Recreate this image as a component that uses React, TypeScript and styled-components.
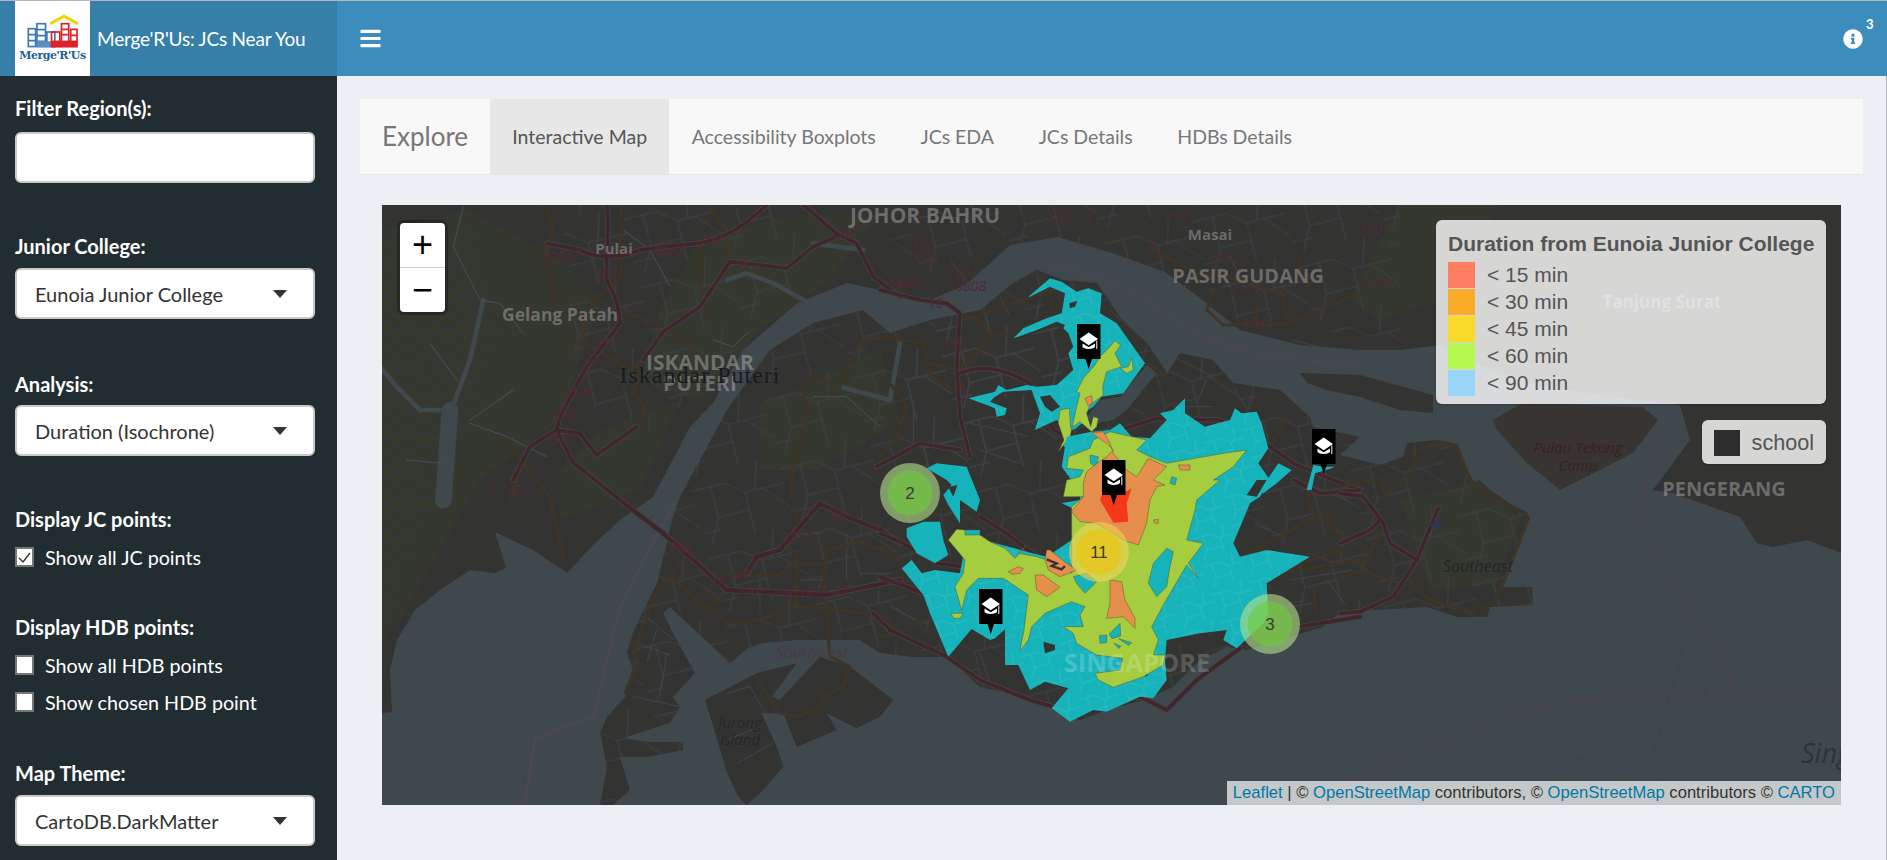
import React from "react";
import styled, { createGlobalStyle } from "styled-components";
import { FaBars, FaInfoCircle } from "react-icons/fa";

const UI_FONT = `Lato, "Noto Sans", sans-serif`;

const GlobalStyle = createGlobalStyle`
  html, body { margin: 0; padding: 0; height: 100%; overflow: hidden; }
  body { font-family: ${UI_FONT}; background: #ecf0f5; }
  * { box-sizing: border-box; }
`;

const Page = styled.div`
  width: 1887px;
  height: 860px;
  display: flex;
  flex-direction: column;
  border-top: 1px solid #b4b8ba;
  overflow: hidden;
`;

const Header = styled.header`
  flex: 0 0 75px;
  display: flex;
  background: #3c8dbc;
`;

const Brand = styled.div`
  width: 337px;
  display: flex;
  align-items: center;
  padding-left: 15px;
  background: #367fa9;
`;

const LogoBox = styled.div`
  width: 75px;
  height: 75px;
  background: #fff;
  display: flex;
  flex-direction: column;
  align-items: center;
  padding-top: 13px;
`;

const LogoText = styled.span`
  font-family: "DejaVu Serif", serif;
  font-weight: 700;
  font-size: 11px;
  letter-spacing: -0.5px;
  line-height: 14px;
  color: #1f5d9c;
`;

const BrandTitle = styled.span`
  margin-left: 7px;
  color: #fff;
  font-size: 19px;
  letter-spacing: -0.2px;
`;

const HeaderBar = styled.div`
  flex: 1;
  display: flex;
  align-items: center;
  justify-content: space-between;
  padding: 0 24px 0 22px;
  color: #fff;
`;

const InfoButton = styled.div`
  position: relative;
  display: flex;
  font-size: 20px;
`;

const InfoBadge = styled.span`
  position: absolute;
  left: 23px;
  top: -13px;
  font-size: 13px;
  font-weight: 700;
`;

const Body = styled.div`
  flex: 1;
  display: flex;
  min-height: 0;
`;

const Sidebar = styled.aside`
  width: 337px;
  padding: 20px 22px 0 15px;
  background: #222d32;
  color: #fff;
`;

const Field = styled.div<{ $top: number }>`
  margin-top: ${(p) => p.$top}px;
`;

const FieldLabel = styled.div<{ $gap?: number }>`
  height: 24px;
  line-height: 24px;
  font-size: 20px;
  font-weight: 700;
  margin-bottom: ${(p) => p.$gap ?? 9}px;
`;

const SelectBox = styled.div`
  height: 51px;
  display: flex;
  align-items: center;
  justify-content: space-between;
  padding: 0 26px 0 18px;
  background: #fff;
  border: 2px solid #c9c9c9;
  border-radius: 6px;
  color: #333;
  font-size: 20px;
`;

const Caret = styled.span`
  width: 0;
  height: 0;
  border-left: 7.5px solid transparent;
  border-right: 7.5px solid transparent;
  border-top: 8px solid #333;
`;

const CheckRow = styled.div<{ $gap?: number }>`
  display: flex;
  align-items: center;
  height: 22px;
  gap: 11px;
  margin-top: ${(p) => p.$gap ?? 0}px;
  font-size: 19.7px;
`;

const CheckBox = styled.span`
  width: 19px;
  height: 20px;
  display: flex;
  align-items: center;
  justify-content: center;
  background: #fff;
  border: 2px solid #767676;
`;

const Main = styled.main`
  flex: 1;
  padding: 23px 23px 0;
  border-right: 1px solid #b4b8bc;
`;

const TabBar = styled.nav`
  height: 76px;
  display: flex;
  background: #f8f8f8;
  border-bottom: 1px solid #e7e7e7;
`;

const TabBrand = styled.div`
  width: 130px;
  padding-left: 22px;
  line-height: 75px;
  font-size: 26px;
  color: #777;
`;

const Tab = styled.div<{ $active?: boolean }>`
  padding: 0 22.3px;
  line-height: 75px;
  font-size: 19.5px;
  color: ${(p) => (p.$active ? "#555" : "#777")};
  background: ${(p) => (p.$active ? "#e7e7e7" : "transparent")};
`;

const MapFrame = styled.div`
  position: relative;
  width: 1459px;
  height: 600px;
  margin: 30px 0 0 22px;
  overflow: hidden;
  background: #3f484c;
`;

const MapCanvas = styled.svg`
  display: block;
  width: 100%;
  height: 100%;
`;

const ZoomControl = styled.div`
  position: absolute;
  left: 15px;
  top: 15px;
  width: 51px;
  border: 3px solid rgba(0, 0, 0, 0.25);
  border-radius: 7px;
  background-clip: padding-box;
`;

const ZoomButton = styled.div<{ $first?: boolean }>`
  height: ${(p) => (p.$first ? 45 : 44)}px;
  display: flex;
  align-items: center;
  justify-content: center;
  background: #fff;
  color: #000;
  font-family: "Liberation Sans", sans-serif;
  font-size: 36px;
  line-height: 1;
  border-bottom: ${(p) => (p.$first ? "1px solid #ccc" : "none")};
  border-radius: ${(p) => (p.$first ? "4px 4px 0 0" : "0 0 4px 4px")};
`;

const LegendBox = styled.div`
  position: absolute;
  right: 15px;
  background: rgba(255, 255, 255, 0.8);
  border-radius: 6px;
  padding: 8px 12px;
  color: #555;
  font-family: "Liberation Sans", Arial, sans-serif;
  font-size: 21px;
  box-shadow: 0 1px 2px rgba(0, 0, 0, 0.2);
`;

const DurationLegend = styled(LegendBox)`
  top: 15px;
  width: 390px;
  height: 184px;
`;

const SchoolLegend = styled(LegendBox)`
  top: 215px;
  width: 124px;
  height: 44px;
  font-size: 21.6px;
  padding-top: 9px;
`;

const LegendTitle = styled.div`
  font-weight: 700;
  font-size: 21px;
  line-height: 24px;
  padding-top: 4px;
  margin-bottom: 5px;
  white-space: nowrap;
`;

const LegendRow = styled.div`
  display: flex;
  align-items: center;
  height: 27px;
  gap: 12px;
`;

const Swatch = styled.span<{ $color: string }>`
  width: 27px;
  height: 26px;
  background: ${(p) => p.$color};
`;

const Attribution = styled.div`
  position: absolute;
  right: 0;
  bottom: 0;
  height: 24px;
  line-height: 24px;
  padding: 0 6px;
  background: rgba(255, 255, 255, 0.7);
  color: #333;
  font-family: "Liberation Sans", Arial, sans-serif;
  font-size: 16.6px;
  white-space: nowrap;
`;

const AttrLink = styled.span`
  color: #0078a8;
`;

const PlaceLabel = styled.text<{ $size?: number; $alpha?: number }>`
  font-family: "Open Sans", sans-serif;
  font-weight: 700;
  font-size: ${(p) => p.$size ?? 17}px;
  fill: rgba(255, 255, 255, ${(p) => p.$alpha ?? 0.28});
  text-anchor: middle;
`;

const CityLabel = styled.text`
  font-family: "Liberation Serif", serif;
  font-size: 24px;
  letter-spacing: 1px;
  fill: #1a1b1d;
  text-anchor: middle;
`;

const RoadNumber = styled.text`
  font-family: "Open Sans", sans-serif;
  font-style: italic;
  font-size: 14px;
  fill: #512b33;
  text-anchor: middle;
`;

const AreaLabel = styled.text<{ $size?: number; $color?: string }>`
  font-family: "Open Sans", sans-serif;
  font-style: italic;
  font-size: ${(p) => p.$size ?? 15}px;
  fill: ${(p) => p.$color ?? "#25272a"};
  text-anchor: middle;
`;

const ClusterCount = styled.text`
  font-family: "Liberation Sans", sans-serif;
  font-size: 17px;
  fill: #3b3b3b;
  text-anchor: middle;
`;

const WATER = "#3f484c";
const LAND = "#333331";
const FOREST = "#34382f";
const MAROON = "#40252a";
const BROWN = "#3f3526";
const TEAL = "#17b3ba";
const GREEN = "#a6cc3f";
const ORANGE = "#e68f4c";
const RED = "#f4391b";

const Z3 = "translate(880 250) scale(.33333)";
const Z4 = "translate(880 480) scale(.33333)";
const Z7 = "translate(380 200) scale(.33333)";
const Z8 = "translate(380 500) scale(.33333)";
const Z11 = "translate(1340 430) scale(.33333)";

const JOHOR =
  "382,205 1841,205 1841,553 1807,540 1773,547 1757,543 1740,517 1673,493 1653,490 1673,463 1690,440 1680,405 1600,395 1540,385 1480,365 1440,345 1400,350 1360,350 1300,345 1240,330 1200,298 1165,272 1112,253 1058,237 1010,245 985,268 965,285 930,300 880,290 847,283 797,303 743,350 713,403 690,427 653,497 620,520 593,545 567,573 533,550 495,532 506,568 495,573 470,570 440,590 415,610 397,640 390,670 392,712 382,713";
const SINGAPORE =
  "673,517 680,497 727,410 770,350 813,323 863,310 890,333 930,320 980,310 1013,283 1037,270 1063,280 1097,283 1120,317 1147,343 1167,373 1180,353 1213,360 1233,383 1280,390 1310,417 1313,427 1360,437 1340,455 1380,465 1403,457 1407,443 1437,440 1453,443 1473,480 1490,490 1530,517 1503,587 1532,587 1533,605 1490,607 1487,617 1457,617 1427,607 1373,610 1340,613 1323,627 1280,640 1247,650 1227,647 1200,660 1173,687 1143,700 1107,710 1080,720 1053,710 1027,697 980,687 947,657 913,657 880,653 860,640 797,640 763,643 748,648 730,663 670,607 663,613 673,633 695,673 673,697 680,707 670,723 623,738 647,742 683,742 683,750 647,757 620,757 630,790 613,805 600,805 607,767 600,733 607,717 625,697 633,670 627,653 633,633 657,583";
const TEKONG =
  "1493,420 1523,403 1643,407 1658,420 1633,453 1560,490 1527,463 1497,430";
const UBIN = "1300,373 1360,375 1433,395 1433,413 1400,410 1360,397 1327,390 1307,383";
const JURONG_ISLAND =
  "975,600 1130,520 1250,490 1175,590 1200,600 1320,470 1410,500 1540,600 1500,650 1430,685 1340,640 1370,690 1250,740 1210,640 1190,640 1145,640 1190,740 1210,800 1140,880 1100,915 1075,890 1040,815 1000,680";
const FORESTS = [
  "382,230 470,210 560,260 600,300 560,420 480,480 400,620 382,640",
  "700,240 790,215 880,215 830,280 760,330 700,400 640,380 660,310",
  "600,430 680,400 640,490 560,520 560,470",
  "1400,205 1500,205 1440,300 1380,320 1350,300",
  "1400,500 1480,480 1520,520 1495,585 1430,590",
  "760,405 880,350 900,420 820,470 760,470",
];
const TOWNS = [
  "560,205 800,205 790,290 700,390 640,440 580,400",
  "880,205 1400,205 1400,340 1240,320 1100,250 990,250 900,285",
  "900,330 1080,300 1120,350 1080,470 920,470",
];

const ROADS_Z7 = {
  maroon: [
    "M680,15 C690,80 680,140 680,175 L680,240 Q720,310 720,370 L620,500 L540,650 L530,690 L580,790 L620,820 L720,900",
    "M500,130 L600,150 Q680,190 780,150 Q850,140 950,130 Q1050,120 1160,15",
    "M530,690 L600,700 L650,765 L770,680",
    "M400,840 L450,740 L530,690",
    "M1270,15 L1370,100 L1430,130 L1480,230 L1560,290",
    "M1370,110 L1300,140 L1220,205 L1050,185 L1000,260 L960,320 L850,395 L790,480",
  ],
  brown: [
    "M490,15 L520,70 L500,150 L520,270 L600,290 L700,320 L850,380 L920,420 L950,470",
    "M520,270 L520,330",
    "M725,15 L720,120 L725,230 L640,300 L610,370 L610,410 L555,465",
    "M600,420 L750,510 L790,480",
    "M780,500 L760,580 L795,620 L780,680",
    "M980,15 L1040,90 L1050,185",
    "M970,120 L960,250 L990,350",
    "M1290,530 L1380,560 L1420,470 L1450,420 L1560,410",
    "M1290,530 L1270,600 L1285,630 L1240,800 L1230,900",
    "M380,720 L430,790 L510,890",
    "M430,790 L390,900",
  ],
  rivers: [
    "M310,300 L270,480 L210,640",
    "M0,500 L50,560 L120,630 L210,630",
    "M1560,430 L1530,600 L1380,560",
    "M1270,300 L1180,250 L1100,220 L1040,240",
    "M1450,150 L1300,130",
  ],
  streams: [
    "M250,20 L220,140 L300,300 L360,310 L430,400",
    "M150,430 L230,540",
    "M270,660 L400,570",
    "M270,670 L380,710 L500,770",
    "M80,780 L190,790",
    "M730,90 L810,150 L870,260",
    "M1000,420 L1060,440 L1100,400",
    "M1300,590 L1400,590 L1500,680",
  ],
};

const ROADS_Z8 = {
  maroon: [
    "M720,0 L850,100 L1040,270 L1340,285 L1560,240",
    "M1100,220 L1130,170 L1200,150 L1320,10 L1400,50 L1500,90 L1560,130",
  ],
  brown: [
    "M510,0 L540,120 L550,180",
    "M920,170 L830,270 L760,460 L770,490 L735,580",
    "M870,230 L1040,370 L1150,360 L1230,320 L1340,325 L1520,350 L1560,400",
    "M990,320 L1040,270",
    "M1040,225 L1200,225 L1230,195 L1330,190",
    "M1210,120 L1250,170 L1250,320",
    "M1240,30 L1250,60 L1340,150 L1330,230 L1350,470 L1410,500 L1390,560 L1330,590 L1320,620 L1260,650 L1200,640 L1125,530",
    "M1340,150 L1440,125 L1510,150 L1560,180",
  ],
  streets:
    "M770,430 L870,465 M800,350 L880,420 M830,390 L800,490 M860,460 L840,590 M760,590 L900,620 M1040,580 L1110,560 L1190,700 M1070,790 L1180,730 M1140,680 L1040,720 M1260,240 L1330,240 M1140,240 L1140,340 M1260,100 L1330,100 M1400,100 L1400,240 M1440,220 L1540,220",
};

const ROADS_Z3 = {
  maroon: [
    "M0,120 L120,150 L200,160 L240,190 L230,350 L240,500 L270,620",
    "M-10,650 L120,580 L240,600",
    "M240,370 Q330,330 450,400 L520,540 L580,570 L640,550 L720,540 L830,505 L1020,510 L1170,590 L1240,640 L1360,690 L1440,720",
  ],
  brown: [
    "M0,260 L130,280 L155,380 L240,430",
    "M150,340 L240,360 L340,260 L500,210",
    "M285,200 L440,145 L510,120 L520,180 L500,220",
    "M340,260 L285,200 L240,210",
    "M820,0 L950,70 L1040,80 L1210,130 L1220,220 L1270,200 L1440,130",
    "M1000,120 L980,180 L1030,225 L1220,225",
    "M1130,170 L1130,220",
    "M1290,130 L1250,0",
    "M1170,590 L1220,510",
    "M800,340 L855,375",
    "M0,620 L60,560",
    "M50,560 L80,470 L30,400",
  ],
  streets:
    "M690,180 L780,260 M880,320 L1000,380 M980,390 L950,460 M1060,410 L1150,560 M880,470 L1000,470 M270,520 L450,560 M300,600 L420,640 M100,480 L100,590 M390,200 L360,140 M620,160 L720,140 M1050,20 L1100,120 M1240,270 L1390,310 M300,150 L210,30",
};

const ROADS_Z4 = {
  maroon: [
    "M0,160 L70,190 L170,250 L250,260",
    "M0,290 L130,340",
    "M300,110 L380,160 L470,230",
    "M-20,400 L30,450 L200,530 L300,600 L450,660 L520,680 L610,680 L780,650 L860,690 L950,600 L1080,505",
    "M1160,400 L1260,440 L1440,410",
    "M1240,0 L1320,40 L1440,30",
  ],
  brown: [
    "M1090,230 L1200,170 L1300,110 L1440,200",
    "M1280,0 L1290,90 L1350,110 L1400,190 L1380,210 L1200,275",
    "M1300,320 L1310,400",
    "M1200,280 L1440,240",
    "M0,470 L60,460 L135,420",
  ],
  streets:
    "M1230,300 L1420,270 M1340,300 L1400,380 M1230,380 L1300,370 M1120,130 L1190,160 M1400,60 L1300,20 M300,520 L330,610 M30,380 L110,420",
};

const ROADS_Z11 = {
  maroon: [
    "M0,550 L60,545 L160,500 L230,390 L295,235",
    "M0,190 L70,200 L130,280 L150,340 L230,390",
    "M0,340 L90,300 L120,270",
  ],
  brown: [
    "M120,210 L220,120 L230,60 L300,40 L350,45 L400,175 L560,250 L560,280 L470,510 L380,550 L270,510 L220,470 L210,450",
    "M0,170 L120,145 L130,180",
    "M0,450 L60,420 L120,310",
    "M60,420 L180,460",
  ],
  shipping: [
    "M960,0 L930,130 L890,250 L950,380 L1170,730 L1180,785",
    "M1500,805 L1110,785 L580,830 L30,1050",
  ],
  lanes: [
    "M420,0 L560,140 L800,360 L1020,640 L1240,1050",
    "M270,550 L240,750 L270,810 L420,870 L700,980 L960,1050",
    "M1030,660 L680,1020",
    "M1030,660 L920,1040",
    "M420,880 L660,1030",
  ],
};

const ISO = {
  northTeal:
    "445,140 510,85 545,95 590,125 625,115 665,130 660,190 710,220 795,340 730,430 665,440 640,470 610,490 620,510 580,540 540,520 530,510 465,540 480,490 455,420 370,425 345,440 330,455 380,475 375,495 350,500 345,475 320,465 265,445 345,425 355,405 380,420 440,405 470,410 530,405 580,360 565,310 580,290 565,250 530,215 470,240 400,265 430,235 500,205 545,190 555,130 510,110 450,140",
  northGreen:
    "705,272 722,285 705,310 725,350 680,365 668,410 670,435 630,465 620,490 632,530 640,500 655,505 650,530 635,545 600,515 572,535 568,475 540,480 535,520 552,570 535,605 570,560 590,470 600,430 590,425 610,385 645,345 660,320 690,290",
  crescent: "755,325 760,360 740,370 722,355 745,350",
  northHoles: [
    "568,160 592,152 585,170 570,175",
    "530,215 555,225 545,245",
    "480,440 510,435 540,470 515,485 495,470",
  ],
  northOrange: "615,445 635,437 637,460 625,468",
  seletarOrange: "895,645 930,645 930,660 900,660",
  seaChannel: "800,345 830,370 740,480 700,510 640,520 620,500 660,450 720,440",
  strip1: "1140,720 1195,640 1235,660 1190,700 1150,730",
  strip2: "1280,720 1300,645 1330,650 1365,650 1340,660 1305,670 1295,720",
  islet: "545,580 630,555 635,600 570,610",
  main:
    "545,-40 560,-130 635,-145 690,-150 720,-170 755,-130 810,-125 860,-180 840,-200 880,-210 915,-245 915,-200 975,-160 1050,-180 1065,-215 1085,-200 1130,-205 1145,-170 1165,-95 1135,-50 1170,0 1140,50 1110,70 1060,190 1080,230 1160,210 1290,230 1200,285 1160,310 1165,400 1150,430 1070,505 1030,480 1040,450 960,460 860,480 855,540 860,600 820,655 780,650 680,695 640,690 570,725 515,685 565,625 495,605 450,630 415,555 375,555 375,448 345,475 330,480 275,447 205,530 150,400 130,345 65,265 95,240 125,280 165,270 240,280 260,170 330,185 440,215 500,230 575,180 580,130 610,100 545,70 600,60 600,35",
  upperWest: "205,225 190,180 180,125 130,125 80,145 80,170 110,220 165,250",
  westBlob:
    "140,-35 170,-50 260,-40 300,60 290,95 240,60 240,130 205,75 190,45 215,15 200,0",
  holes: [
    "490,485 525,495 525,510 495,520",
    "710,425 725,430 715,445",
    "860,205 875,210 860,225",
    "795,572 805,585 795,590",
    "205,22 232,15 220,50",
    "618,302 645,305 630,315",
    "1100,45 1130,0 1160,0 1130,50",
  ],
  green:
    "560,-35 565,-70 630,-95 640,-120 690,-145 800,-120 770,-90 810,-70 860,-50 1030,-80 1100,-90 1060,-40 1000,0 1020,0 950,60 945,90 920,180 970,190 925,250 955,295 920,255 850,375 815,440 835,480 820,525 855,525 850,555 790,590 700,622 655,600 645,580 720,570 728,535 650,525 590,490 580,460 550,440 610,440 600,405 615,380 575,365 540,380 495,400 455,440 445,480 420,512 432,450 445,345 370,295 295,295 260,330 245,390 225,320 250,280 255,240 205,180 230,148 255,150 300,165 330,185 375,205 405,235 440,195 415,220 470,230 500,240 575,280 575,130 575,80 610,50 550,50 560,0 600,-10 610,-30",
  greenPatch: "212,400 250,400 240,415 222,415",
  tealOnGreen: [
    "860,205 820,250 805,310 830,350 860,320 870,260 880,215",
    "658,467 680,465 680,488 660,490",
    "688,462 720,430 722,468 696,476",
    "702,490 722,498 716,506",
    "716,476 755,488 746,496",
    "255,150 300,150 300,165 255,165",
    "630,-75 655,-70 650,-35 632,-50",
    "875,-10 890,-5 885,15 870,10",
    "580,290 620,280 650,305 615,340 590,310",
  ],
  orange:
    "635,-142 670,-145 690,-110 700,-80 740,-30 770,-10 805,-65 860,-40 820,0 855,15 830,20 810,60 800,130 775,195 730,180 700,160 650,130 600,125 575,95 610,50 610,10 620,-25 665,-60 680,-70 700,-90 680,-110 650,-130",
  orange2: "690,300 725,305 735,360 765,415 765,445 730,410 680,415 690,370",
  orange3: "500,210 510,210 560,250 590,270 540,290 505,270 495,240",
  orange4: "465,285 490,285 540,322 500,350 470,330",
  orange5: "385,275 415,260 430,265 420,280 395,282",
  orange6: "820,120 835,118 835,130 825,130",
  red: "660,60 665,45 730,40 755,25 740,70 745,125 700,128",
};

const PLACES: [string, number, number, number?][] = [
  ["JOHOR BAHRU", 925, 223, 21],
  ["PASIR GUDANG", 1248, 283, 20],
  ["Masai", 1210, 240, 15],
  ["Tanjung Surat", 1662, 308, 17],
  ["Pulai", 614, 254, 15],
  ["Gelang Patah", 560, 321, 17.5],
  ["ISKANDAR", 700, 370, 21],
  ["PUTERI", 700, 391, 21],
  ["PENGERANG", 1724, 496, 20],
];

const ROAD_NUMBERS: [string, number, number][] = [
  ["309A", 557, 262], ["308A", 668, 257], ["307", 605, 280], ["102", 711, 244],
  ["6", 742, 268], ["312", 606, 348], ["312", 595, 364], ["312A", 578, 398],
  ["313", 564, 420], ["313", 562, 444], ["17703", 509, 495], ["307", 846, 238],
  ["102", 926, 263], ["18801", 906, 288], ["16", 936, 308], ["1401", 962, 277],
  ["18808", 967, 291], ["108", 955, 350], ["8", 960, 390], ["1712", 1223, 264],
  ["1715", 1244, 298], ["1717", 1257, 331], ["2207", 1374, 234], ["2210", 1374, 287],
  ["1712", 1180, 223], ["212", 1060, 221], ["3", 1087, 225], ["4", 1151, 250],
  ["103", 922, 247], ["268", 680, 553], ["22", 716, 587], ["47", 741, 581],
  ["20", 750, 598], ["18", 785, 598], ["18", 806, 598], ["17", 841, 596],
  ["33", 789, 543], ["34", 836, 520], ["27", 873, 532],
];

const SCHOOL_PINS: [number, number][] = [
  [1077, 324],
  [1102, 460],
  [1312, 429],
  [979, 589],
];

const CLUSTERS: { x: number; y: number; n: string; big?: boolean }[] = [
  { x: 910, y: 493, n: "2" },
  { x: 1099, y: 552, n: "11", big: true },
  { x: 1270, y: 624, n: "3" },
];

const Poly = ({ p, fill, line }: { p: string; fill: string; line?: boolean }) => (
  <polygon
    points={p}
    fill={fill}
    stroke={line ? "#4b5a3a" : "none"}
    strokeWidth={line ? 1.5 : 0}
    strokeLinejoin="round"
  />
);

const Lines = ({
  paths,
  color,
  width,
  dash,
}: {
  paths: string[];
  color: string;
  width: number;
  dash?: string;
}) => (
  <g
    fill="none"
    stroke={color}
    strokeWidth={width}
    strokeLinecap="round"
    strokeLinejoin="round"
    strokeDasharray={dash}
  >
    {paths.map((d, i) => (
      <path key={i} d={d} />
    ))}
  </g>
);

// highway with the pale casing the dark tiles have round it
const Highway = ({ paths, width = 11 }: { paths: string[]; width?: number }) => (
  <>
    <Lines paths={paths} color="#444446" width={width + 5} />
    <Lines paths={paths} color={MAROON} width={width} />
  </>
);

const SchoolPin = ({ x, y }: { x: number; y: number }) => (
  <g transform={`translate(${x} ${y})`}>
    <path d="M0 0H23.5V35H15L11.7 45L8.5 35H0Z" fill="#000" />
    <path d="M11.7 8.5L21 15L11.7 21.2L2.5 15Z" fill="#fff" />
    <path d="M5.5 19.5L11.7 23.2L18 19.5V23C16 25.5 7.5 25.5 5.5 23Z" fill="#fff" />
    <path d="M19.8 16.5V25" stroke="#fff" strokeWidth="1" />
  </g>
);

const MapTiles = () => (
  <MapCanvas viewBox="382 205 1459 600">
    <defs>
      <pattern id="swamp" width="26" height="13" patternUnits="userSpaceOnUse">
        <path d="M2 4H11M16 10H24" stroke="#2d3a4e" strokeWidth="1" />
      </pattern>
      <pattern id="streets" width="92" height="70" patternUnits="userSpaceOnUse" patternTransform="rotate(-14)">
        <path
          d="M0 14H34L52 28H92M20 14V46L8 70M52 28V70M70 0L62 28M20 46H52M70 28L92 52M0 58H20"
          fill="none"
          stroke="#414245"
          strokeWidth="0.9"
        />
      </pattern>
      <pattern id="tealStreets" width="120" height="88" patternUnits="userSpaceOnUse" patternTransform="rotate(-18)">
        <path
          d="M0 20H48L76 40H120M28 20V64L12 88M76 40V88M96 0L88 40M28 64H76"
          fill="none"
          stroke="rgba(255,255,255,.09)"
          strokeWidth="3"
        />
      </pattern>
    </defs>
    <rect x="382" y="205" width="1459" height="600" fill={WATER} />
    <Poly p={JOHOR} fill={LAND} />
    <Poly p={SINGAPORE} fill={LAND} />
    <Poly p={TEKONG} fill="#373431" />
    <Poly p={UBIN} fill={LAND} />
    <g transform={Z8}>
      <Poly p={JURONG_ISLAND} fill={LAND} />
    </g>
    {FORESTS.map((p, i) => (
      <Poly key={i} p={p} fill={FOREST} />
    ))}
    <polygon points="382,230 470,225 500,330 440,480 395,600 382,640" fill="url(#swamp)" />
    <Poly p={SINGAPORE} fill="url(#streets)" />
    {TOWNS.map((p, i) => (
      <Poly key={i} p={p} fill="url(#streets)" />
    ))}
    <g transform={Z7}>
      <Lines paths={ROADS_Z7.rivers} color={WATER} width={14} />
      <Lines paths={["M210,630 L190,900"]} color={WATER} width={50} />
      <Lines paths={ROADS_Z7.streams} color="#465057" width={3} />
    </g>
    <g transform={Z3}>
      <Poly p={ISO.seaChannel} fill={WATER} />
    </g>
    <g transform={Z8}>
      <Lines paths={["M890,0 L780,200 L720,320 L640,650 L465,715 L435,915"]} color="#4a474f" width={9} />
      <Lines paths={["M845,0 L740,180 L460,690 L420,915"]} color="#3e4459" width={5} dash="25 24" />
      <path d={ROADS_Z8.streets} fill="none" stroke="#46474a" strokeWidth={2.5} />
      <Lines paths={ROADS_Z8.brown} color={BROWN} width={9} />
      <Highway paths={ROADS_Z8.maroon} width={13} />
    </g>
    <g transform={Z7}>
      <Lines paths={ROADS_Z7.brown} color={BROWN} width={9} />
      <Highway paths={ROADS_Z7.maroon} />
    </g>
    <g transform={Z3}>
      <path d={ROADS_Z3.streets} fill="none" stroke="#46474a" strokeWidth={2.5} />
      <Lines paths={["M450,40 Q700,60 900,220 Q1050,330 1440,340"]} color="#48464f" width={8} />
      <Lines paths={ROADS_Z3.brown} color={BROWN} width={9} />
      <Highway paths={ROADS_Z3.maroon} />
    </g>
    <g transform={Z4}>
      <path d={ROADS_Z4.streets} fill="none" stroke="#46474a" strokeWidth={2.5} />
      <Lines paths={ROADS_Z4.brown} color={BROWN} width={9} />
      <Highway paths={ROADS_Z4.maroon} />
    </g>
    <g transform={Z11}>
      <Lines paths={ROADS_Z11.shipping} color="#474650" width={8} />
      <Lines paths={ROADS_Z11.lanes} color="#3d4457" width={5} dash="25 24" />
      <Lines paths={ROADS_Z11.brown} color={BROWN} width={9} />
      <Highway paths={ROADS_Z11.maroon} />
      <path d="M285 262L292 290L310 278M285 262L292 292L262 282M290 290L286 302" fill="none" stroke="#30345a" strokeWidth={6} />
    </g>

    {PLACES.map(([t, x, y, s]) => (
      <PlaceLabel key={t} x={x} y={y} $size={s}>
        {t}
      </PlaceLabel>
    ))}
    <CityLabel x={700} y={383}>Iskandar Puteri</CityLabel>
    {ROAD_NUMBERS.map(([t, x, y], i) => (
      <RoadNumber key={i} x={x} y={y}>
        {t}
      </RoadNumber>
    ))}
    <AreaLabel x={740} y={728}>Jurong</AreaLabel>
    <AreaLabel x={740} y={745}>Island</AreaLabel>
    <AreaLabel x={812} y={658} $size={16} $color="#4a3c40">Southwest</AreaLabel>
    <AreaLabel x={1478} y={572} $size={16}>Southeast</AreaLabel>
    <AreaLabel x={1578} y={453} $size={15} $color="#3c2126">Pulau Tekong</AreaLabel>
    <AreaLabel x={1578} y={471} $size={15} $color="#3c2126">Camp</AreaLabel>
    <AreaLabel x={1826} y={763} $size={27} $color="#2d3438">Sing</AreaLabel>

    <g transform={Z3}>
      <Poly p={ISO.northTeal} fill={TEAL} />
      <Poly p={ISO.northTeal} fill="url(#tealStreets)" />
      <Poly p={ISO.strip1} fill={TEAL} />
      <Poly p={ISO.strip2} fill={TEAL} />
      <Poly p={ISO.islet} fill={TEAL} />
      {ISO.northHoles.map((p, i) => (
        <Poly key={i} p={p} fill={LAND} />
      ))}
      <Poly p={ISO.northGreen} fill={GREEN} line />
      <Poly p={ISO.crescent} fill={GREEN} line />
      <Poly p={ISO.northOrange} fill={ORANGE} line />
    </g>
    <g transform={Z4}>
      <Poly p={ISO.main} fill={TEAL} />
      <Poly p={ISO.main} fill="url(#tealStreets)" />
      <Poly p={ISO.upperWest} fill={TEAL} />
      <Poly p={ISO.westBlob} fill={TEAL} />
      {ISO.holes.map((p, i) => (
        <Poly key={i} p={p} fill={LAND} />
      ))}
      <Poly p={ISO.green} fill={GREEN} line />
      <Poly p={ISO.greenPatch} fill={GREEN} line />
      {ISO.tealOnGreen.map((p, i) => (
        <Poly key={i} p={p} fill={TEAL} line />
      ))}
      <Poly p={ISO.orange} fill={ORANGE} line />
      <Poly p={ISO.orange2} fill={ORANGE} line />
      <Poly p={ISO.orange3} fill={ORANGE} line />
      <Poly p={ISO.orange4} fill={ORANGE} line />
      <Poly p={ISO.orange5} fill={ORANGE} line />
      <Poly p={ISO.orange6} fill={ORANGE} line />
      <Poly p={ISO.red} fill={RED} />
      <path d="M500,238 L530,250 L515,258 L545,268 L555,258" fill="none" stroke={LAND} strokeWidth={7} />
    </g>
    <g transform={Z3}>
      <Poly p={ISO.seletarOrange} fill={ORANGE} line />
    </g>
    <PlaceLabel x={1137} y={672} $size={25.5} $alpha={0.2}>SINGAPORE</PlaceLabel>

    {SCHOOL_PINS.map(([x, y]) => (
      <SchoolPin key={x} x={x} y={y} />
    ))}
    {CLUSTERS.map((c) => (
      <g key={c.n}>
        <circle cx={c.x} cy={c.y} r={30} fill={c.big ? "rgba(241,211,87,.6)" : "rgba(181,226,140,.6)"} />
        <circle cx={c.x} cy={c.y} r={22.5} fill={c.big ? "rgba(240,194,12,.6)" : "rgba(110,204,57,.6)"} />
        <ClusterCount x={c.x} y={c.y + 6}>
          {c.n}
        </ClusterCount>
      </g>
    ))}
  </MapCanvas>
);

const LEGEND = [
  { color: "#fe7d63", label: "< 15 min" },
  { color: "#faac29", label: "< 30 min" },
  { color: "#f9d92c", label: "< 45 min" },
  { color: "#b5f84f", label: "< 60 min" },
  { color: "#99d4f9", label: "< 90 min" },
];

const TABS = ["Accessibility Boxplots", "JCs EDA", "JCs Details", "HDBs Details"];

const Logo = () => (
  <svg width="53" height="35" viewBox="75 38 160 105">
    <path d="M148 67L190 44L232 67" fill="none" stroke="#efd500" strokeWidth="9" />
    <g fill="none" stroke="#3b78b8" strokeWidth="5">
      <rect x="82" y="82" width="22" height="54" />
      <rect x="108" y="67" width="26" height="69" />
      <rect x="138" y="92" width="24" height="44" />
      <path d="M82 100H104M82 118H104M108 85H134M108 103H134M108 120H134" />
    </g>
    <rect x="108" y="120" width="52" height="18" fill="#5b8fc4" />
    <g fill="none" stroke="#df2027" strokeWidth="5">
      <rect x="152" y="92" width="25" height="44" />
      <rect x="182" y="67" width="22" height="69" />
      <rect x="210" y="84" width="19" height="52" />
      <path d="M182 84H204M182 100H204M210 102H229" />
    </g>
    <rect x="152" y="118" width="78" height="20" fill="#df2027" />
  </svg>
);

export default function App() {
  return (
    <Page>
      <GlobalStyle />
      <Header>
        <Brand>
          <LogoBox>
            <Logo />
            <LogoText>Merge'R'Us</LogoText>
          </LogoBox>
          <BrandTitle>Merge'R'Us: JCs Near You</BrandTitle>
        </Brand>
        <HeaderBar>
          <FaBars size={23} />
          <InfoButton>
            <FaInfoCircle />
            <InfoBadge>3</InfoBadge>
          </InfoButton>
        </HeaderBar>
      </Header>
      <Body>
        <Sidebar>
          <Field $top={0}>
            <FieldLabel $gap={12}>Filter Region(s):</FieldLabel>
            <SelectBox />
          </Field>
          <Field $top={51}>
            <FieldLabel $gap={10}>Junior College:</FieldLabel>
            <SelectBox>
              Eunoia Junior College
              <Caret />
            </SelectBox>
          </Field>
          <Field $top={53}>
            <FieldLabel>Analysis:</FieldLabel>
            <SelectBox>
              Duration (Isochrone)
              <Caret />
            </SelectBox>
          </Field>
          <Field $top={51}>
            <FieldLabel $gap={15}>Display JC points:</FieldLabel>
            <CheckRow>
              <CheckBox>
                <svg width="13" height="11" viewBox="0 0 13 11">
                  <path d="M1 6L5 10L12 1" fill="none" stroke="#333" strokeWidth="1.4" />
                </svg>
              </CheckBox>
              Show all JC points
            </CheckRow>
          </Field>
          <Field $top={47}>
            <FieldLabel $gap={15}>Display HDB points:</FieldLabel>
            <CheckRow>
              <CheckBox />
              Show all HDB points
            </CheckRow>
            <CheckRow $gap={15}>
              <CheckBox />
              Show chosen HDB point
            </CheckRow>
          </Field>
          <Field $top={48}>
            <FieldLabel $gap={10}>Map Theme:</FieldLabel>
            <SelectBox>
              CartoDB.DarkMatter
              <Caret />
            </SelectBox>
          </Field>
        </Sidebar>
        <Main>
          <TabBar>
            <TabBrand>Explore</TabBrand>
            <Tab $active>Interactive Map</Tab>
            {TABS.map((t) => (
              <Tab key={t}>{t}</Tab>
            ))}
          </TabBar>
          <MapFrame>
            <MapTiles />
            <ZoomControl>
              <ZoomButton $first>+</ZoomButton>
              <ZoomButton>−</ZoomButton>
            </ZoomControl>
            <DurationLegend>
              <LegendTitle>Duration from Eunoia Junior College</LegendTitle>
              {LEGEND.map((l) => (
                <LegendRow key={l.label}>
                  <Swatch $color={l.color} />
                  {l.label}
                </LegendRow>
              ))}
            </DurationLegend>
            <SchoolLegend>
              <LegendRow>
                <Swatch $color="#2d2d2d" />
                school
              </LegendRow>
            </SchoolLegend>
            <Attribution>
              <AttrLink>Leaflet</AttrLink> | © <AttrLink>OpenStreetMap</AttrLink> contributors, ©{" "}
              <AttrLink>OpenStreetMap</AttrLink> contributors © <AttrLink>CARTO</AttrLink>
            </Attribution>
          </MapFrame>
        </Main>
      </Body>
    </Page>
  );
}
